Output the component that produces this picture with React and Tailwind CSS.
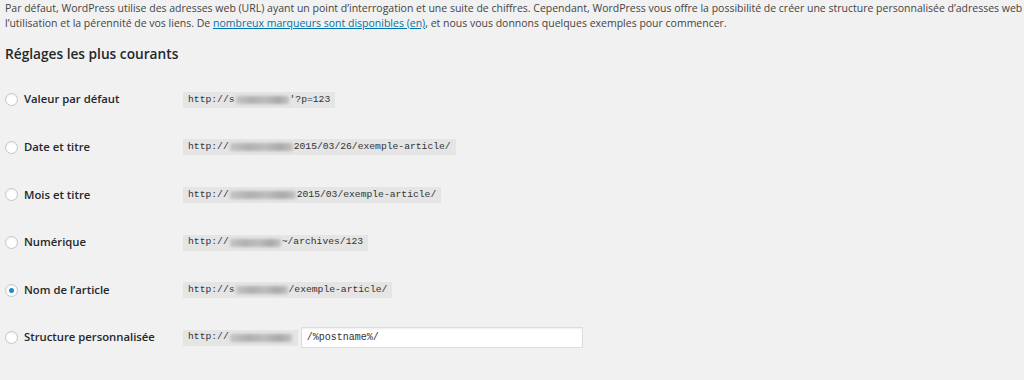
const rows = [
  { label: 'Valeur par défaut', pre: 'http://s', blurW: 'w-[53px]', post: "'?p=123" },
  { label: 'Date et titre', pre: 'http://', blurW: 'w-[63px]', post: '2015/03/26/exemple-article/' },
  { label: 'Mois et titre', pre: 'http://', blurW: 'w-[66px]', post: '2015/03/exemple-article/' },
  { label: 'Numérique', pre: 'http://', blurW: 'w-[51px]', post: '~/archives/123' },
  { label: 'Nom de l’article', pre: 'http://s', blurW: 'w-[52px]', post: '/exemple-article/', checked: true },
  { label: 'Structure personnalisée', pre: 'http://', blurW: 'w-[62px]', post: '', custom: true },
];

function Radio({ checked }) {
  return (
    <span className="w-[13px] h-[13px] rounded-full border border-[#c3c6c9] bg-white shadow-[inset_0_1px_2px_rgba(0,0,0,0.07)] flex items-center justify-center shrink-0">
      {checked && <span className="w-[5px] h-[5px] rounded-full bg-[#1e8cbe]" />}
    </span>
  );
}

function Row({ row }) {
  return (
    <div className="h-[47.6px] flex items-center">
      <div className="w-[178px] flex items-center gap-[6px]">
        <Radio checked={row.checked} />
        <span className="text-[11.3px] font-semibold text-[#23282d]">{row.label}</span>
      </div>
      <code className="h-[16px] bg-[#e5e5e5] px-[5px] flex items-center text-[9.7px] text-[#333] font-['Liberation_Mono',monospace]">
        <span>{row.pre}</span>
        <span className={`${row.blurW} h-[8px] mx-[1px] rounded-[2px] bg-[linear-gradient(90deg,#c4c4c4,#b0b0b0_30%,#bdbdbd_55%,#a9a9a9_80%,#c2c2c2)] blur-[1.5px]`} />
        <span>{row.post}</span>
      </code>
      {row.custom && (
        <div className="ml-[3px] w-[282px] h-[21px] bg-white border border-[#dddddd] shadow-[inset_0_1px_2px_rgba(0,0,0,0.07)] flex items-center px-[5px] text-[10px] text-[#333] font-['Liberation_Mono',monospace]">
          /%postname%/
        </div>
      )}
    </div>
  );
}

export default function App() {
  return (
    <div className="w-[1024px] h-[380px] overflow-hidden bg-[#f1f1f1] px-[5px] text-[#444] font-['Open_Sans',sans-serif]">
      <p className="pt-[1px] text-[10.5px] leading-[15px] whitespace-nowrap">
        Par défaut, WordPress utilise des adresses web (URL) ayant un point d’interrogation et une suite de chiffres. Cependant, WordPress vous offre la possibilité de créer une structure personnalisée d’adresses web
        <br />
        l’utilisation et la pérennité de vos liens. De{' '}
        <a href="#" className="text-[#0073aa] underline">nombreux marqueurs sont disponibles (en)</a>, et nous vous donnons quelques exemples pour commencer.
      </p>
      <h2 className="mt-[13px] text-[13.7px] font-semibold text-[#23282d] leading-[20px]">Réglages les plus courants</h2>
      <div className="mt-[12px]">
        {rows.map((r) => (
          <Row key={r.label} row={r} />
        ))}
      </div>
      <h2 className="mt-[17px] text-[14px] font-semibold text-[#23282d] leading-[20px]">Facultatif</h2>
    </div>
  );
}
